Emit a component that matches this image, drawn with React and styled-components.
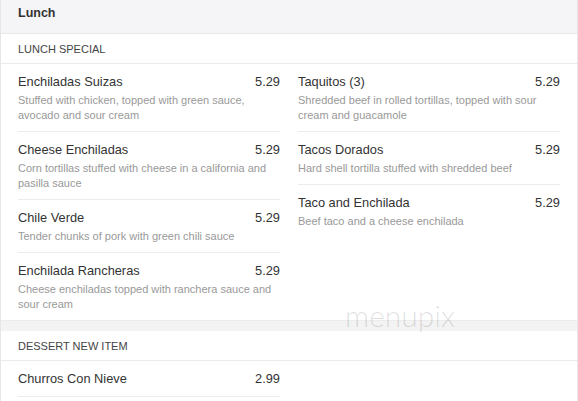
import styled, { createGlobalStyle } from "styled-components";

const GlobalStyle = createGlobalStyle`
    html, body {
        margin: 0;
        padding: 0;
        background: #ffffff;
    }
    body {
        font-family: "Liberation Sans", Arial, sans-serif;
    }
`;

const lunchLeft = [
    { name: "Enchiladas Suizas", price: "5.29", desc: "Stuffed with chicken, topped with green sauce, avocado and sour cream" },
    { name: "Cheese Enchiladas", price: "5.29", desc: "Corn tortillas stuffed with cheese in a california and pasilla sauce" },
    { name: "Chile Verde", price: "5.29", desc: "Tender chunks of pork with green chili sauce" },
    { name: "Enchilada Rancheras", price: "5.29", desc: "Cheese enchiladas topped with ranchera sauce and sour cream" },
];

const lunchRight = [
    { name: "Taquitos (3)", price: "5.29", desc: "Shredded beef in rolled tortillas, topped with sour cream and guacamole" },
    { name: "Tacos Dorados", price: "5.29", desc: "Hard shell tortilla stuffed with shredded beef" },
    { name: "Taco and Enchilada", price: "5.29", desc: "Beef taco and a cheese enchilada" },
];

const Panel = styled.div`
    position: relative;
    width: 578px;
    height: 401px;
    box-sizing: border-box;
    border-left: 1px solid #e6e6e6;
    border-right: 1px solid #e6e6e6;
    overflow: hidden;
`;

const Header = styled.div`
    background: #f5f5f8;
    border-bottom: 1px solid #e8e8ec;
    padding: 4px 17px 11px;
    font-size: 12.5px;
    line-height: 18px;
    font-weight: bold;
    color: #333;
`;

const SectionTitle = styled.div`
    height: 30px;
    box-sizing: border-box;
    display: flex;
    align-items: center;
    padding: 0 17px;
    border-bottom: 1px solid #ebebeb;
    font-size: 11px;
    text-transform: uppercase;
    color: #444;
`;

const Columns = styled.div`
    display: grid;
    grid-template-columns: 262px 262px;
    column-gap: 18px;
    padding: 0 17px;
    align-items: start;
`;

const Column = styled.div`
    display: flex;
    flex-direction: column;
`;

const Item = styled.div`
    padding: 9px 0 8px;
    border-bottom: 1px solid ${(p) => (p.$last ? "transparent" : "#ececec")};
`;

const TitleRow = styled.div`
    display: flex;
    justify-content: space-between;
    font-size: 12.8px;
    line-height: 18px;
    color: #333;
`;

const Desc = styled.div`
    margin-top: 2px;
    font-size: 11px;
    line-height: 15px;
    color: #999;
`;

const Band = styled.div`
    height: 10px;
    margin-top: -1px;
    background: #f3f3f3;
    border-top: 1px solid #ececec;
`;

const Watermark = styled.div`
    position: absolute;
    left: 344px;
    top: 300px;
    font-family: "Lato", sans-serif;
    font-weight: 300;
    font-size: 30px;
    line-height: 30px;
    color: rgba(0, 0, 0, 0.13);
    pointer-events: none;
`;

const MenuItem = ({ item, last }) => (
    <Item $last={last}>
        <TitleRow>
            <span>{item.name}</span>
            <span>{item.price}</span>
        </TitleRow>
        {item.desc && <Desc>{item.desc}</Desc>}
    </Item>
);

const App = () => {
    return (
        <>
            <GlobalStyle />
            <Panel>
                <Header>Lunch</Header>
                <SectionTitle>Lunch Special</SectionTitle>
                <Columns>
                    <Column>
                        {lunchLeft.map((it, i) => (
                            <MenuItem key={it.name} item={it} last={i === lunchLeft.length - 1} />
                        ))}
                    </Column>
                    <Column>
                        {lunchRight.map((it, i) => (
                            <MenuItem key={it.name} item={it} last={i === lunchRight.length - 1} />
                        ))}
                    </Column>
                </Columns>
                <Band />
                <SectionTitle>Dessert New Item</SectionTitle>
                <Columns>
                    <Column>
                        <MenuItem item={{ name: "Churros Con Nieve", price: "2.99" }} />
                    </Column>
                </Columns>
                <Watermark>menupix</Watermark>
            </Panel>
        </>
    );
};

export default App;
